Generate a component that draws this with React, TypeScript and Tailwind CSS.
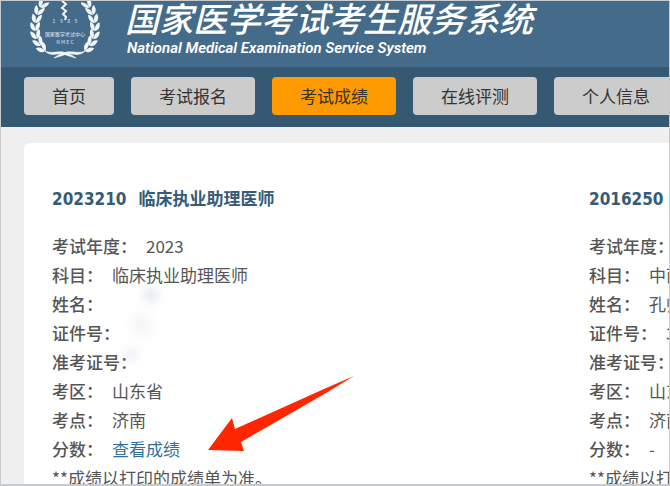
import React, { useState } from 'react';

type Registro = {
  codigo: string;
  titulo: string;
  year: string;
  subject: string;
  name: string;
  idNo: string;
  area: string;
  site: string;
  hasScore: boolean;
};

const NAV = ['首页', '考试报名', '考试成绩', '在线评测', '个人信息'];

const RECORDS: Registro[] = [
  { codigo: '2023210', titulo: '临床执业助理医师', year: '2023', subject: '临床执业助理医师', name: '', idNo: '', area: '山东省', site: '济南', hasScore: true },
  { codigo: '2016250', titulo: '', year: '', subject: '中西', name: '孔帅', idNo: '3', area: '山东', site: '济南', hasScore: false },
];

// x, y, stem angle of each leaf pair, bottom to top
const LEAVES = [
  [42, 48, -50],
  [38, 42, -35],
  [35, 35, -18],
  [34, 27, -4],
  [35, 19, 8],
  [37, 11, 20],
  [41, 4, 32],
];

function Branch() {
  return (
    <g fill="#f3f6f9">
      {LEAVES.map(([x, y, a]) => (
        <g key={y} transform={`translate(${x} ${y}) rotate(${a})`}>
          <path d="M0 3C-5 2-5-3-4-6C0-4 0-1 0 3Z" />
          <path d="M0 3C0-2 2-5 5-6C6-2 4 2 0 3Z" />
        </g>
      ))}
      <path d="M44 50C50 53 56 50 62 51C67 52 71 54 75 57C70 56 66 54 62 53C56 52 50 56 44 50Z" stroke="#f3f6f9" strokeWidth="0.6" />
    </g>
  );
}

function Emblem() {
  return (
    <svg viewBox="0 0 130 66" className="h-[66px] w-[130px] shrink-0" aria-hidden="true">
      <Branch />
      <g transform="translate(128 0) scale(-1 1)"><Branch /></g>
      <path d="M61 0L65 3L61 7L65 10L62 13L65 16L64 19" fill="none" stroke="#f3f6f9" strokeWidth="2" />
      <g fill="#c6d5e1" textAnchor="middle" fontFamily="Noto Sans CJK SC, sans-serif" fontWeight="500">
        <text x="64" y="22" fontSize="5">1 &#160; &#160;9 &#160; &#160;8 &#160; &#160;5</text>
        <text x="64" y="35" fontSize="5">国家医学考试中心</text>
        <text x="64" y="43" fontSize="5">N M E C</text>
      </g>
    </svg>
  );
}

function Row({ label, children }: { label: string; children?: React.ReactNode }) {
  return (
    <div className="flex gap-[9px]">
      <dt className="font-medium">{label}：</dt>
      <dd>{children}</dd>
    </div>
  );
}

function Record({ r }: { r: Registro }) {
  return (
    <section className="w-[537px] shrink-0">
      <h2 className="flex gap-3 font-['DejaVu_Sans_Condensed','Noto_Sans_CJK_SC',sans-serif] font-bold text-[#355b77]">
        <span>{r.codigo}</span>
        <span>{r.titulo}</span>
      </h2>
      <dl className="mt-[18px] leading-[29px]">
        <Row label="考试年度">{r.year}</Row>
        <Row label="科目">{r.subject}</Row>
        <Row label="姓名">{r.name}</Row>
        <Row label="证件号">{r.idNo}</Row>
        <Row label="准考证号" />
        <Row label="考区">{r.area}</Row>
        <Row label="考点">{r.site}</Row>
        <Row label="分数">
          {r.hasScore ? <a href="#score" className="text-[#31709c]">查看成绩</a> : '-'}
        </Row>
      </dl>
      <p className="leading-[29px]">**成绩以打印的成绩单为准。</p>
    </section>
  );
}

export default function App() {
  const [active, setActive] = useState('考试成绩');

  return (
    <div className="relative h-screen overflow-hidden border border-b-2 border-[#c8cbcd] bg-[#efefef] font-['Noto_Sans_CJK_SC',sans-serif] text-[17px] text-[#555]">
      <header className="flex h-[66px] bg-[#456b8a] text-white">
        <Emblem />
        <div className="-ml-1 whitespace-nowrap italic">
          <h1 className="-ml-0.5 text-[34px] leading-[34px] font-medium">国家医学考试考生服务系统</h1>
          <p className="font-['Roboto',sans-serif] text-[15px] leading-[26px] font-semibold">National Medical Examination Service System</p>
        </div>
      </header>

      <nav className="flex gap-[17px] bg-[#355972] pt-[10px] pb-3 pl-[23px]">
        {NAV.map(n => (
          <button
            key={n}
            onClick={() => setActive(n)}
            className={`h-[38px] shrink-0 rounded px-7 text-[#333] ${n === active ? 'bg-[#ff9900]' : 'bg-[#cccccc]'}`}
          >
            {n}
          </button>
        ))}
      </nav>

      <main className="mt-4 ml-[23px] flex rounded-tl-md bg-white pt-11 pb-8 pl-7">
        {RECORDS.map(r => <Record key={r.codigo} r={r} />)}
      </main>

      {/* smudges over the hidden personal data */}
      <div className="absolute top-[286px] left-[142px] h-4 w-4 rounded-full bg-gray-300/50 blur-[5px]" />
      <div className="absolute top-[312px] left-[130px] h-6 w-5 rounded-full bg-gray-200/40 blur-[6px]" />
      <div className="absolute top-[345px] left-[122px] h-4 w-4 rounded-full bg-slate-300/30 blur-[5px]" />

      <svg viewBox="0 0 148 76" className="absolute top-[374px] left-[205px] h-[76px] w-[148px]" aria-hidden="true">
        <path d="M2 75L26 43L29 54L118 14L148 1L120 18L35 67L38 76Z" fill="#ff2600" />
      </svg>
    </div>
  );
}
